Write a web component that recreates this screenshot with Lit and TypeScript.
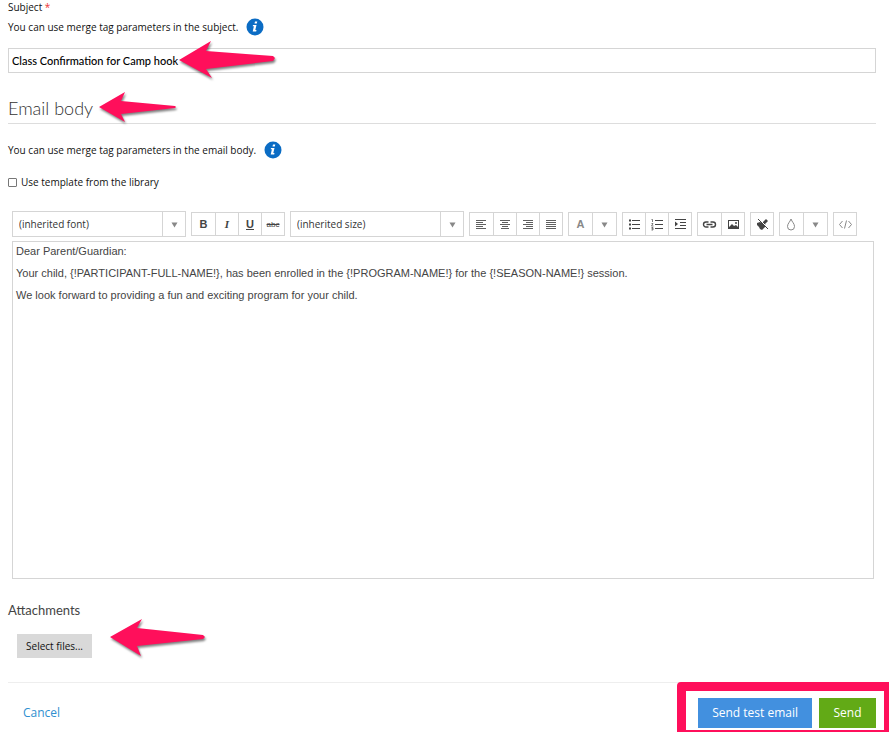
import { LitElement, html, svg, css } from "lit";
import { customElement } from "lit/decorators.js";

const icons = {
  left: svg`<path d="M2 3.500H12M2 5.500H9M2 7.500H12M2 9.500H9M2 11.500H12" stroke="currentColor" opacity=".85"/>`,
  center: svg`<path d="M2 3.500H12M4 5.500H10M2 7.500H12M4 9.500H10M3 11.500H11" stroke="currentColor" opacity=".85"/>`,
  right: svg`<path d="M2 3.500H12M5 5.500H12M2 7.500H12M5 9.500H12M2 11.500H12" stroke="currentColor" opacity=".85"/>`,
  justify: svg`<path d="M2 3.500H12M2 5.500H12M2 7.500H12M2 9.500H12M2 11.500H12" stroke="currentColor" opacity=".85"/>`,
  bullets: svg`<path d="M5 3.500H13M5 7.500H13M5 11.500H13" stroke="currentColor"/><path d="M2 2.500h2v2H2zM2 6.500h2v2H2zM2 10.500h2v2H2z" fill="currentColor"/>`,
  numbers: svg`<path d="M5 3.500H13M5 7.500H13M5 11.500H13" stroke="currentColor"/><path d="M1.500 2.500H2.500V5M1.500 6.500H3L1.500 9H3.500M1.500 10.500H3V13H1.500M1.500 11.700H3" stroke="currentColor" stroke-width=".7" fill="none"/>`,
  indent: svg`<path d="M2 2.500H13M7 5.500H13M7 8.500H13M2 11.500H13" stroke="currentColor"/><path d="M2 4.500L5 7 2 9.500z" fill="currentColor"/>`,
  link: svg`<path d="M6.500 10H4a2.500 2.500 0 0 1 0-5H6.500M8.500 5H11a2.500 2.500 0 0 1 0 5H8.500M4.500 7.500H10.500" stroke="currentColor" stroke-width="1.400" fill="none"/>`,
  image: svg`<path fill-rule="evenodd" d="M2 3H13V12H2zM3 4V10L6 7 8 9 10 8 12 10V4z" fill="currentColor"/><circle cx="10" cy="6" r="1" fill="currentColor"/>`,
  clean: svg`<path d="M2 6L5 5 7 6 11 2 13 4 10 7 11 9 7 13 5 12 4 10 2 8z" fill="currentColor"/><path d="M3 1L14 12" stroke="#fff" stroke-width="1"/><path d="M3 2L13 12" stroke="currentColor"/>`,
  drop: svg`<path d="M7 2C6 5 3.500 6.500 3.500 9.500a3.500 3.500 0 0 0 7 0C10.500 6.500 8 5 7 2z" stroke="currentColor" fill="none"/>`,
  code: svg`<path d="M4.500 4L1.500 7.500 4.500 11M10.500 4L13.500 7.500 10.500 11M8.500 3.500L6.500 11.500" stroke="currentColor" fill="none"/>`,
  down: svg`<path d="M4.500 5.500H10.500L7.500 10.500z" fill="currentColor"/>`,
};
const icon = (name: keyof typeof icons) =>
  html`<svg class="icon" viewBox="0 0 15 15" aria-hidden="true">${icons[name]}</svg>`;

const arrow = (place: string, w: number, h: number, points: string) =>
  html`<svg class="arrow ${place}" width=${w} height=${h} viewBox="0 0 ${w} ${h}" aria-hidden="true">
    <polygon points=${points} fill="#ff0f5b" />
  </svg>`;

const info = (label: string) => html`<button class="info" aria-label=${label}>
  <svg width="18" height="18" viewBox="0 0 18 18" aria-hidden="true">
    <circle cx="9" cy="9" r="8.500" fill="#0b6cc4" />
    <path d="M9 3.500h2.300l-.5 2H8.500zM7 7h3.500l-1.200 5h1.200l-.3 1.400H6.700L7.900 8.300H6.700z" fill="#fff" />
  </svg>
</button>`;

@customElement("app-root")
export class AppRoot extends LitElement {
  static styles = css`
    :host {
      display: block;
      position: relative;
      overflow: hidden;
      background: #fff;
      color: #111;
      font: 10px/14px "Open Sans", "Noto Sans", sans-serif;
    }
    * { box-sizing: border-box; }
    button, input, select { font: inherit; color: inherit; margin: 0; border-radius: 0; }
    button { padding: 0; cursor: pointer; white-space: nowrap; }
    .page { padding: 0 13px 4px 8px; }
    .label { display: block; }
    .required { color: #e33; }
    .hint { display: flex; align-items: center; gap: 8px; height: 18px; margin-top: 4px; }
    .info { display: flex; border: 0; background: none; }
    .anchor { position: relative; }
    .subject-field { margin-top: 12px; }
    .subject {
      display: block;
      width: 100%;
      height: 25px;
      padding: 0 3px;
      border: 1px solid #d5d5d5;
      background: #fff;
      color: #000;
      font: 500 11px Lato, "Liberation Sans", sans-serif;
    }
    .heading { margin-top: 23px; border-bottom: 1px solid #ddd; }
    h2 { margin: 0; padding-bottom: 3px; font: 300 18px/24px Lato, sans-serif; color: #333; }
    .body-hint { margin-top: 17px; }
    .check { display: flex; align-items: center; gap: 4px; margin-top: 16px; }
    .check input {
      appearance: none;
      width: 9px;
      height: 9px;
      border: 1px solid #777;
      border-radius: 1px;
      background: #fff;
    }
    .check input:checked { background: #0b6cc4; }
    .editor { margin: 22px 2px 0 4px; }
    .toolbar { display: flex; flex-wrap: wrap; align-items: center; gap: 5px; margin-bottom: 4px; }
    .combo { position: relative; display: flex; width: 174px; height: 26px; }
    .combo select {
      appearance: none;
      width: 100%;
      padding: 0 30px 0 6px;
      border: 1px solid #d5d5d5;
      background: #fff;
      color: #333;
    }
    .combo-arrow {
      position: absolute;
      inset: 1px 1px 1px auto;
      width: 23px;
      display: flex;
      align-items: center;
      justify-content: center;
      border-left: 1px solid #d5d5d5;
      color: #888;
      pointer-events: none;
    }
    .group { display: flex; height: 24px; border: 1px solid #d5d5d5; }
    .tool {
      display: flex;
      align-items: center;
      justify-content: center;
      width: 23px;
      border: 0;
      background: #fff;
      color: #444;
      font: bold 11px "Liberation Sans", Arial, sans-serif;
    }
    .tool + .tool { border-left: 1px solid #d5d5d5; }
    .tight .tool:first-child { width: 22px; }
    .wide .tool + .tool { width: 24px; }
    .muted { color: #888; }
    .italic { font-family: "Liberation Serif", serif; font-style: italic; }
    .underline { text-decoration: underline; }
    .strike { font-size: 8px; font-weight: normal; text-decoration: line-through; }
    .icon { width: 15px; height: 15px; }
    .canvas {
      min-height: 338px;
      padding: 1px 3px;
      border: 1px solid #d5d5d5;
      color: #444;
      font: 11px/16px "Liberation Sans", Arial, sans-serif;
      outline: none;
    }
    .canvas p { margin: 0 0 6px; }
    h3 { margin: 22px 0 0; font: 400 13px/18px Lato, sans-serif; color: #444; }
    .files { display: flex; margin: 15px 0 0 9px; }
    .select-files { width: 75px; height: 24px; border: 0; background: #d9d9d9; }
    .footer {
      display: flex;
      align-items: center;
      justify-content: space-between;
      margin-top: 24px;
      padding-top: 15px;
      border-top: 1px solid #eee;
      font-size: 12px;
    }
    .cancel { margin-left: 15px; line-height: 16px; color: #2f8fd0; text-decoration: none; }
    .actions { position: relative; display: flex; gap: 7px; }
    .action { min-width: 57px; height: 30px; padding: 0 14px; border: 0; color: #fff; }
    .test { background: #4290df; }
    .send { background: #62aa16; }
    .frame {
      position: absolute;
      inset: -16px -17px -11px -21px;
      border: 9px solid #ff0f5b;
      border-radius: 4px;
      pointer-events: none;
    }
    .arrow {
      position: absolute;
      overflow: visible;
      filter: drop-shadow(1px 2px 1px rgba(0, 0, 0, 0.5));
      pointer-events: none;
    }
    .to-subject { left: 171px; top: -7px; }
    .to-heading { left: 91px; top: -4px; }
    .to-files { left: 93px; top: -15px; }
  `;

  render() {
    return html`<main class="page">
      <label class="label" for="subject">Subject <span class="required">*</span></label>
      <div class="hint">You can use merge tag parameters in the subject. ${info("Subject merge tags")}</div>
      <div class="anchor subject-field">
        <input id="subject" class="subject" type="text" value="Class Confirmation for Camp hook" />
        ${arrow("to-subject", 96, 38, "0,19 32,0 27,10 94,15 96,17 94,20 27,28 33,37")}
      </div>

      <div class="anchor heading">
        <h2>Email body</h2>
        ${arrow("to-heading", 77, 30, "0,15 26,0 22,9 76,14 77,15 76,16 22,22 26,30")}
      </div>
      <div class="hint body-hint">You can use merge tag parameters in the email body. ${info("Body merge tags")}</div>
      <label class="check"><input type="checkbox" />Use template from the library</label>

      <section class="editor">
        <div class="toolbar" role="toolbar" aria-label="Formatting">
          ${this.combo("Font", "(inherited font)")}
          <div class="group">
            <button class="tool" aria-label="Bold">B</button>
            <button class="tool italic" aria-label="Italic">I</button>
            <button class="tool underline" aria-label="Underline">U</button>
            <button class="tool strike" aria-label="Strikethrough">abc</button>
          </div>
          ${this.combo("Size", "(inherited size)")}
          ${this.group("", ["left", "center", "right", "justify"])}
          <div class="group wide">
            <button class="tool muted" aria-label="Text colour">A</button>
            <button class="tool muted" aria-label="Choose text colour">${icon("down")}</button>
          </div>
          ${this.group("tight", ["bullets", "numbers", "indent"])}
          ${this.group("", ["link", "image"])}
          ${this.group("tight", ["clean"])}
          ${this.group("wide", ["drop", "down"], true)}
          ${this.group("tight", ["code"], true)}
        </div>
        <div class="canvas" contenteditable="true" role="textbox" aria-multiline="true" aria-label="Email body">
          <p>Dear Parent/Guardian:</p>
          <p>Your child, {!PARTICIPANT-FULL-NAME!}, has been enrolled in the {!PROGRAM-NAME!} for the {!SEASON-NAME!} session.</p>
          <p>We look forward to providing a fun and exciting program for your child.</p>
        </div>
      </section>

      <h3>Attachments</h3>
      <div class="anchor files">
        <button class="select-files">Select files...</button>
        ${arrow("to-files", 95, 37, "0,18 32,0 27,9 93,16 95,18 93,20 27,27 31,37")}
      </div>

      <footer class="footer">
        <a class="cancel" href="#">Cancel</a>
        <div class="actions">
          <button class="action test">Send test email</button>
          <button class="action send">Send</button>
          <div class="frame"></div>
        </div>
      </footer>
    </main>`;
  }

  private combo(label: string, value: string) {
    return html`<div class="combo">
      <select aria-label=${label}><option>${value}</option></select>
      <span class="combo-arrow">${icon("down")}</span>
    </div>`;
  }

  private group(kind: string, names: (keyof typeof icons)[], muted = false) {
    return html`<div class="group ${kind}">
      ${names.map((n) => html`<button class="tool ${muted ? "muted" : ""}" aria-label=${n}>${icon(n)}</button>`)}
    </div>`;
  }
}
